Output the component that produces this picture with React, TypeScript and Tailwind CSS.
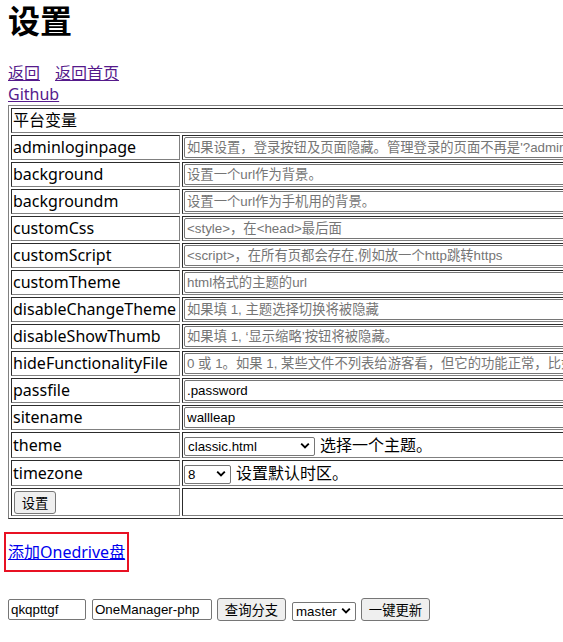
import React from 'react';

type Row = { name: string; placeholder?: string; value?: string };

const rows: Row[] = [
  { name: 'adminloginpage', placeholder: "如果设置，登录按钮及页面隐藏。管理登录的页面不再是'?admin'，而是'?这个值'。" },
  { name: 'background', placeholder: '设置一个url作为背景。' },
  { name: 'backgroundm', placeholder: '设置一个url作为手机用的背景。' },
  { name: 'customCss', placeholder: '<style>，在<head>最后面' },
  { name: 'customScript', placeholder: '<script>，在所有页都会存在,例如放一个http跳转https' },
  { name: 'customTheme', placeholder: 'html格式的主题的url' },
  { name: 'disableChangeTheme', placeholder: '如果填 1, 主题选择切换将被隐藏' },
  { name: 'disableShowThumb', placeholder: '如果填 1, ‘显示缩略’按钮将被隐藏。' },
  { name: 'hideFunctionalityFile', placeholder: '0 或 1。如果 1, 某些文件不列表给游客看，但它的功能正常，比如 readme.md 与 head.md。' },
  { name: 'passfile', value: '.password' },
  { name: 'sitename', value: 'wallleap' },
];

const cell =
  'border border-[#808080] [border-style:inset] p-px align-middle text-left font-normal';
const field =
  "h-[21px] border border-[#767676] rounded-[2px] px-[2px] py-px bg-white text-black text-[13.33px] leading-[17px] font-['Liberation_Sans','Noto_Sans_CJK_SC',sans-serif] placeholder:text-[#757575] outline-none";
const btn =
  "h-[23px] border border-[#767676] rounded-[3px] bg-[#efefef] px-[6px] text-[13.33px] text-black font-['Noto_Sans_CJK_SC',sans-serif]";

function Chevron() {
  return (
    <svg className="pointer-events-none absolute right-[5px] top-1/2 -translate-y-1/2" width="10" height="7" viewBox="0 0 10 7">
      <path d="M1.2 1.2 5 5 8.8 1.2" fill="none" stroke="#000" strokeWidth="1.9" />
    </svg>
  );
}

function Select({ value, options, width }: { value: string; options: string[]; width: string }) {
  return (
    <span className="relative inline-block align-middle">
      <select
        defaultValue={value}
        className={`${width} h-[19px] appearance-none border border-[#767676] rounded-[2px] bg-white pl-[3px] pr-4 text-[13.33px] leading-[17px] text-black font-['Liberation_Sans',sans-serif] outline-none`}
      >
        {options.map((o) => (
          <option key={o}>{o}</option>
        ))}
      </select>
      <Chevron />
    </span>
  );
}

export default function App() {
  return (
    <div className="min-h-screen w-full overflow-hidden bg-white px-2 text-black font-['Noto_Sans','Noto_Sans_CJK_SC',sans-serif] text-[16px] leading-[21px]">
      <h1 className="mb-[21px] text-[32px] font-bold leading-[42px]">设置</h1>
      <div>
        <a href="#" className="text-[#551a8b] underline">返回</a>
        <a href="#" className="ml-[15px] text-[#551a8b] underline">返回首页</a>
      </div>
      <div>
        <a href="#" className="text-[#551a8b] underline">Github</a>
      </div>

      <table className="w-[900px] border border-[#808080] [border-style:outset] border-separate border-spacing-[2px]">
        <tbody>
          <tr>
            <td colSpan={2} className={`${cell} h-[25px]`}>平台变量</td>
          </tr>
          {rows.map((r) => (
            <tr key={r.name}>
              <td className={`${cell} h-[25px] w-[169px] whitespace-nowrap`}>{r.name}</td>
              <td className={cell}>
                <input
                  name={r.name}
                  defaultValue={r.value}
                  placeholder={r.placeholder}
                  className={`${field} block w-[640px]`}
                />
              </td>
            </tr>
          ))}
          <tr>
            <td className={`${cell} h-[25px]`}>theme</td>
            <td className={cell}>
              <Select value="classic.html" options={['classic.html', 'home.html']} width="w-[131px]" />
              <span className="ml-[5px] align-middle">选择一个主题。</span>
            </td>
          </tr>
          <tr>
            <td className={`${cell} h-[25px]`}>timezone</td>
            <td className={cell}>
              <Select value="8" options={['8', '0', '-5']} width="w-[47px]" />
              <span className="ml-[5px] align-middle">设置默认时区。</span>
            </td>
          </tr>
          <tr>
            <td className={`${cell} h-[27px]`}>
              <button type="button" className={`${btn} ml-px mt-px block w-[42px] px-0`}>设置</button>
            </td>
            <td className={cell}></td>
          </tr>
        </tbody>
      </table>

      <div className="-ml-[4px] mt-[13px] w-[125px] border-2 border-[#e81123] pl-[2px] pt-[8px] pb-[7px]">
        <a href="#" className="text-[#0000ee] underline whitespace-nowrap">添加Onedrive盘</a>
      </div>

      <div className="mt-[26px] flex items-center">
        <input defaultValue="qkqpttgf" className={`${field} w-[78px]`} />
        <input defaultValue="OneManager-php" className={`${field} ml-[6px] w-[120px]`} />
        <button type="button" className={`${btn} ml-[5px] w-[69px]`}>查询分支</button>
        <span className="ml-[6px]">
          <Select value="master" options={['master', 'dev']} width="w-[64px]" />
        </span>
        <button type="button" className={`${btn} ml-[5px] w-[69px]`}>一键更新</button>
      </div>
    </div>
  );
}
